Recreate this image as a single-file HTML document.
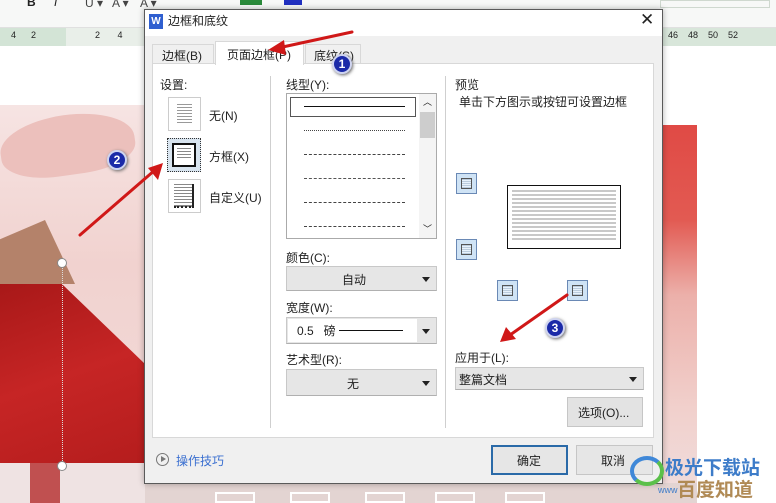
<!DOCTYPE html>
<html><head><meta charset="utf-8"><style>
*{margin:0;padding:0;box-sizing:border-box}
body{width:776px;height:503px;overflow:hidden;position:relative;background:#fff;font-family:"Liberation Sans","Noto Sans CJK SC",sans-serif;font-size:12px;color:#222}
.a{position:absolute}
.t{position:absolute;white-space:nowrap;font-size:12px;color:#222}
.dd{position:absolute;background:#e6e6e6;border:1px solid #c8c8c8;border-bottom-color:#b0b0b0}
.dd:after{content:"";position:absolute;right:6px;top:50%;margin-top:-2px;border-left:4px solid transparent;border-right:4px solid transparent;border-top:5px solid #222}
.pb{position:absolute;width:21px;height:21px;border:1px solid #6a89b5;background:#cfe3f5}
.pb:before{content:"";position:absolute;left:4px;top:4px;right:4px;bottom:4px;border:1px solid #555;background:repeating-linear-gradient(0deg,#bcd 0 1px,#e8f2fb 1px 2px)}
.ln{position:absolute;left:15px;width:101px;height:0}
.num{position:absolute;width:20px;height:20px;border-radius:50%;background:#1b2aa8;border:2px solid #cfd4f0;color:#fff;font-size:12px;font-weight:bold;text-align:center;line-height:16px;box-shadow:1px 1px 3px #666}
.ic{position:absolute;top:-4px;font-size:12px;color:#444}
</style></head><body>
<!-- toolbar -->
<div class="a" style="left:0;top:0;width:776px;height:28px;background:#f7f8f7;border-bottom:1px solid #e0e0e0"></div>
<div class="t" style="left:27px;top:-5px;font-weight:bold">B</div>
<div class="t" style="left:54px;top:-5px;font-style:italic">I</div>
<div class="ic" style="left:85px">U ▾</div>
<div class="ic" style="left:112px">A ▾</div>
<div class="ic" style="left:140px">A ▾</div>
<div class="a" style="left:240px;top:0;width:22px;height:5px;background:#2a8a3a"></div>
<div class="a" style="left:284px;top:0;width:18px;height:5px;background:#2030c0"></div>
<div class="a" style="left:660px;top:0;width:110px;height:8px;border:1px solid #cfd8cf"></div>
<!-- ruler -->
<div class="a" style="left:0;top:28px;width:776px;height:18px;background:#e9efe9"></div>
<div class="a" style="left:0;top:28px;width:66px;height:18px;background:#d3e4d6"></div>
<div class="a" style="left:660px;top:28px;width:116px;height:18px;background:#d8e6da"></div>
<div class="t" style="left:11px;top:30px;font-size:9px">4&nbsp;&nbsp;&nbsp;&nbsp;&nbsp;&nbsp;2</div>
<div class="t" style="left:95px;top:30px;font-size:9px">2&nbsp;&nbsp;&nbsp;&nbsp;&nbsp;&nbsp;&nbsp;4</div>
<div class="t" style="left:668px;top:30px;font-size:9px">46&nbsp;&nbsp;&nbsp;&nbsp;48&nbsp;&nbsp;&nbsp;&nbsp;50&nbsp;&nbsp;&nbsp;&nbsp;52</div>
<!-- left artwork -->
<div class="a" style="left:0;top:105px;width:145px;height:398px;background:linear-gradient(180deg,#f6e4e3 0,#f1d2cf 40%,#f2dcdb 100%)"></div>
<div class="a" style="left:0;top:115px;width:135px;height:60px;border-radius:50% 50% 40% 40%;background:#ecc0bc;transform:rotate(-8deg)"></div>
<div class="a" style="left:0;top:283px;width:145px;height:180px;background:linear-gradient(160deg,#a81818,#c62525 50%,#b51d1d);clip-path:polygon(0 0,42% 0,100% 45%,100% 100%,0 100%)"></div>
<div class="a" style="left:0;top:220px;width:75px;height:64px;background:#b4826a;clip-path:polygon(0 100%,100% 100%,60% 0,0 30%)"></div>
<div class="a" style="left:0;top:463px;width:145px;height:40px;background:#efe3e3"></div>
<div class="a" style="left:30px;top:463px;width:30px;height:40px;background:#c05050"></div>
<div class="a" style="left:62px;top:265px;width:0;height:200px;border-left:1px dotted #ddd"></div>
<div class="a" style="left:57px;top:258px;width:10px;height:10px;border-radius:50%;background:#fff;border:1px solid #888"></div>
<div class="a" style="left:57px;top:461px;width:10px;height:10px;border-radius:50%;background:#fff;border:1px solid #888"></div>
<!-- right artwork -->
<div class="a" style="left:662px;top:125px;width:35px;height:378px;background:linear-gradient(180deg,#e04a45 0,#e25a52 25%,#ecb0aa 45%,#f1d0cc 75%,#f0dede 100%)"></div>
<div class="a" style="left:145px;top:483px;width:552px;height:20px;background:#e3d4d2"></div>
<div class="a" style="left:215px;top:492px;width:40px;height:11px;border:2px solid #fff"></div>
<div class="a" style="left:290px;top:492px;width:40px;height:11px;border:2px solid #fff"></div>
<div class="a" style="left:365px;top:492px;width:40px;height:11px;border:2px solid #fff"></div>
<div class="a" style="left:435px;top:492px;width:40px;height:11px;border:2px solid #fff"></div>
<div class="a" style="left:505px;top:492px;width:40px;height:11px;border:2px solid #fff"></div>
<!-- dialog -->
<div class="a" style="left:144px;top:9px;width:519px;height:475px;background:#f0f0f0;border:1px solid #5a5a5a;box-shadow:0 0 6px rgba(0,0,0,.3)"></div>
<div class="a" style="left:145px;top:10px;width:517px;height:26px;background:#fff"></div>
<div class="a" style="left:149px;top:14px;width:14px;height:15px;background:#2f5fd0;color:#fff;font-size:10px;font-weight:bold;text-align:center;line-height:15px">W</div>
<div class="t" style="left:168px;top:12px">边框和底纹</div>
<div class="t" style="left:640px;top:10px;font-size:17px">✕</div>
<!-- tabs -->
<div class="a" style="left:152px;top:44px;width:62px;height:20px;background:#f0f0f0;border:1px solid #d8d8d8;border-bottom:none"></div>
<div class="t" style="left:162px;top:47px">边框(B)</div>
<div class="a" style="left:305px;top:44px;width:56px;height:20px;background:#f0f0f0;border:1px solid #d8d8d8;border-bottom:none"></div>
<div class="t" style="left:314px;top:47px">底纹(S)</div>
<div class="a" style="left:152px;top:63px;width:502px;height:375px;background:#fff;border:1px solid #d8d8d8"></div>
<div class="a" style="left:215px;top:41px;width:89px;height:24px;background:#fff;border:1px solid #d8d8d8;border-bottom:none"></div>
<div class="t" style="left:227px;top:46px">页面边框(P)</div>
<!-- settings -->
<div class="t" style="left:160px;top:76px">设置:</div>
<div class="a" style="left:168px;top:97px;width:33px;height:34px;border:1px solid #ccc;background:#fff"></div>
<div class="a" style="left:177px;top:104px;width:15px;height:20px;background:repeating-linear-gradient(180deg,#999 0 1px,transparent 1px 3px)"></div>
<div class="t" style="left:209px;top:107px">无(N)</div>
<div class="a" style="left:167px;top:138px;width:34px;height:34px;border:1px dotted #333;background:#d8e4ef"></div>
<div class="a" style="left:172px;top:143px;width:24px;height:24px;border:2px solid #111;background:#fff"></div>
<div class="a" style="left:177px;top:148px;width:14px;height:12px;background:repeating-linear-gradient(180deg,#888 0 1px,transparent 1px 3px)"></div>
<div class="t" style="left:209px;top:148px">方框(X)</div>
<div class="a" style="left:168px;top:179px;width:33px;height:34px;border:1px solid #ccc;background:#fff"></div>
<div class="a" style="left:174px;top:184px;width:20px;height:24px;border-right:2px solid #222;border-bottom:2px dotted #222;background:repeating-linear-gradient(180deg,#888 0 1px,transparent 1px 3px)"></div>
<div class="t" style="left:209px;top:189px">自定义(U)</div>
<div class="a" style="left:270px;top:76px;width:1px;height:352px;background:#cfcfcf"></div>
<div class="a" style="left:445px;top:76px;width:1px;height:352px;background:#cfcfcf"></div>
<!-- line style -->
<div class="t" style="left:286px;top:76px">线型(Y):</div>
<div class="a" style="left:286px;top:93px;width:151px;height:146px;border:1px solid #aaa;background:#fff"></div>
<div class="a" style="left:290px;top:97px;width:126px;height:20px;border:1px solid #555"></div>
<div class="ln" style="left:304px;top:106px;border-top:1px solid #111"></div>
<div class="ln" style="left:304px;top:130px;border-top:1px dotted #444"></div>
<div class="ln" style="left:304px;top:154px;border-top:1px dashed #444"></div>
<div class="ln" style="left:304px;top:178px;border-top:1px dashed #555"></div>
<div class="ln" style="left:304px;top:202px;border-top:1px dashed #444"></div>
<div class="ln" style="left:304px;top:226px;border-top:1px dashed #444"></div>
<div class="a" style="left:419px;top:94px;width:17px;height:144px;background:#f4f4f4"></div>
<div class="a" style="left:420px;top:112px;width:15px;height:26px;background:#cdcdcd"></div>
<div class="t" style="left:423px;top:95px;font-size:9px">︿</div>
<div class="t" style="left:423px;top:222px;font-size:9px">﹀</div>
<div class="t" style="left:286px;top:249px">颜色(C):</div>
<div class="dd" style="left:286px;top:266px;width:151px;height:25px"></div>
<div class="t" style="left:342px;top:271px">自动</div>
<div class="t" style="left:286px;top:299px">宽度(W):</div>
<div class="dd" style="left:286px;top:317px;width:151px;height:27px"></div>
<div class="a" style="left:288px;top:319px;width:129px;height:23px;background:#fff"></div>
<div class="t" style="left:297px;top:322px">0.5&nbsp;&nbsp;&nbsp;磅</div>
<div class="a" style="left:339px;top:330px;width:64px;border-top:1px solid #111"></div>
<div class="t" style="left:286px;top:351px">艺术型(R):</div>
<div class="dd" style="left:286px;top:369px;width:151px;height:27px"></div>
<div class="t" style="left:347px;top:375px">无</div>
<!-- preview -->
<div class="t" style="left:455px;top:76px">预览</div>
<div class="t" style="left:459px;top:93px">单击下方图示或按钮可设置边框</div>
<div class="a" style="left:507px;top:185px;width:114px;height:64px;border:1.5px solid #111;background:#fff"></div>
<div class="a" style="left:512px;top:190px;width:104px;height:52px;background:repeating-linear-gradient(180deg,#c8c8c8 0 2px,#fff 2px 4px)"></div>
<div class="pb" style="left:456px;top:173px"></div>
<div class="pb" style="left:456px;top:239px"></div>
<div class="pb" style="left:497px;top:280px"></div>
<div class="pb" style="left:567px;top:280px"></div>
<div class="t" style="left:455px;top:349px">应用于(L):</div>
<div class="dd" style="left:455px;top:367px;width:189px;height:23px"></div>
<div class="t" style="left:459px;top:371px">整篇文档</div>
<div class="a" style="left:567px;top:397px;width:76px;height:30px;background:#e3e3e3;border:1px solid #c6c6c6"></div>
<div class="t" style="left:578px;top:404px">选项(O)...</div>
<!-- bottom -->
<div class="a" style="left:156px;top:453px;width:13px;height:13px;border:1px solid #777;border-radius:50%"></div>
<div class="a" style="left:161px;top:456px;border-top:3.5px solid transparent;border-bottom:3.5px solid transparent;border-left:5px solid #777"></div>
<div class="t" style="left:176px;top:452px;color:#3a6fd0">操作技巧</div>
<div class="a" style="left:491px;top:445px;width:77px;height:30px;background:#e6e6e6;border:2px solid #2a6aa8"></div>
<div class="t" style="left:517px;top:452px">确定</div>
<div class="a" style="left:576px;top:445px;width:77px;height:30px;background:#e6e6e6;border:1px solid #c6c6c6"></div>
<div class="t" style="left:601px;top:452px">取消</div>
<!-- annotations -->
<svg class="a" style="left:0;top:0" width="776" height="503">
<g stroke="#d01818" stroke-width="3" stroke-linecap="round" fill="#d01818">
<line x1="352" y1="32" x2="278" y2="48"/>
<polygon points="268,50 284,40 286,55" stroke="none"/>
<line x1="80" y1="235" x2="155" y2="170"/>
<polygon points="163,163 148,168 158,180" stroke="none"/>
<line x1="567" y1="295" x2="510" y2="335"/>
<polygon points="500,342 506,327 516,339" stroke="none"/>
</g>
</svg>
<div class="num" style="left:332px;top:54px">1</div>
<div class="num" style="left:107px;top:150px">2</div>
<div class="num" style="left:545px;top:318px">3</div>
<!-- watermark -->
<div class="a" style="left:630px;top:456px;width:34px;height:30px;border:4px solid #3f88d8;border-radius:50%;border-right-color:#5ac04a;border-bottom-color:#5ac04a"></div>
<div class="t" style="left:665px;top:453px;font-size:19px;font-weight:bold;color:#3d7cc9">极光下载站</div>
<div class="t" style="left:677px;top:475px;font-size:19px;font-weight:bold;color:#b08a55">百度知道</div>
<div class="t" style="left:658px;top:485px;font-size:9px;color:#3d7cc9">www</div>
</body></html>
